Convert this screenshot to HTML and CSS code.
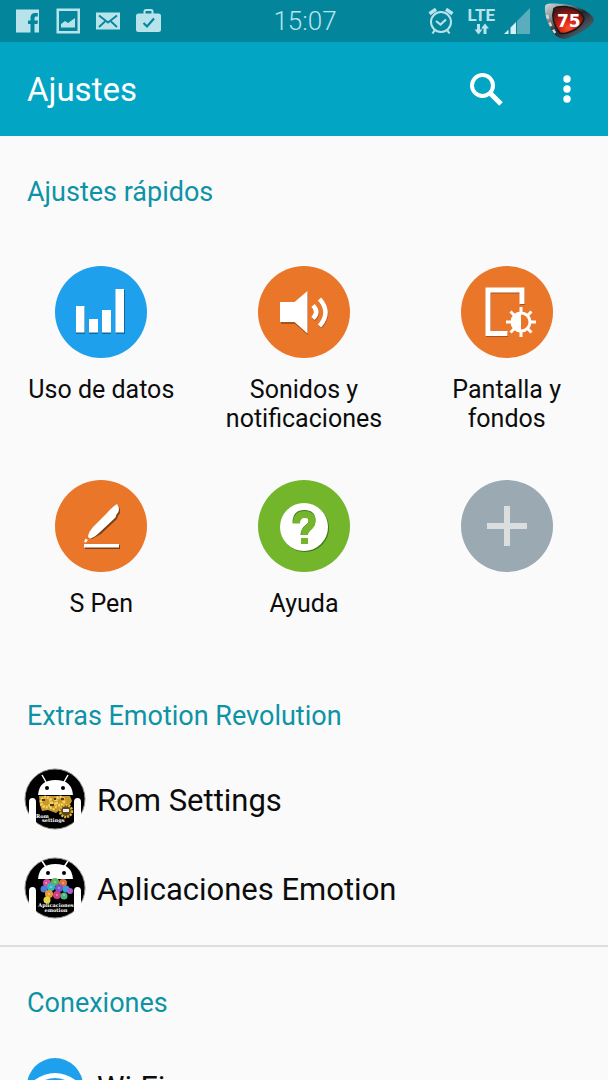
FILE: index.html
```html
<!DOCTYPE html>
<html lang="es">
<head>
  <meta charset="UTF-8" />
  <meta name="viewport" content="width=device-width, initial-scale=1.0" />
  <title>Ajustes</title>
  <link rel="stylesheet" href="styles.css">
</head>
<body>

<div class="statusbar">
  <div class="status-left">
    <svg width="24" height="26" viewBox="0 0 24 26">
      <path fill="#b9e3ea" fill-rule="evenodd" d="M0 1.500h23v23h-4.500v-8.500h3l.5-3.500h-3.500v-2.200c0-1.200.5-1.800 1.800-1.800h1.500V5h-2.600c-3.200 0-4.700 1.900-4.700 4.800v2.700h-2.500v3.500h2.500v8.500H0z"/>
    </svg>
    <svg width="24" height="26" viewBox="0 0 24 26">
      <path fill="#b9e3ea" fill-rule="evenodd" d="M.5.500h23.500v25H.500zM3 3v20h18.500V3z"/>
      <path fill="#b9e3ea" d="M5 19.500v-3.500l4-3 3 2 7-5v9.500z"/>
    </svg>
    <svg width="24" height="26" viewBox="0 0 24 26">
      <path fill="#b9e3ea" d="M0 4.500h24v17H0z"/>
      <path fill="none" stroke="#03869c" stroke-width="1.800" d="M3 7.500l9 7 9-7M3 19l6-5.500M21 19l-6-5.500"/>
    </svg>
    <svg width="25" height="26" viewBox="0 0 25 26">
      <path fill="none" stroke="#b9e3ea" stroke-width="2" d="M8.500 6V3.500q0-1.500 1.500-1.500h5q1.500 0 1.500 1.500V6"/>
      <rect x="0" y="5.500" width="25" height="18.500" rx="2.500" fill="#b9e3ea"/>
      <path fill="none" stroke="#03869c" stroke-width="2.200" d="M7.500 15l3.500 3.500 7-8"/>
    </svg>
  </div>
  <time class="clock">15:07</time>
  <div class="status-right">
    <svg width="26" height="28" viewBox="0 0 26 28">
      <g fill="none" stroke="#b9e3ea">
        <circle cx="13" cy="15" r="10" stroke-width="2"/>
        <path stroke-width="2.200" d="M8 14l4.500 3.500 5.500-5M6.500 23.500l-2 3M19.500 23.500l2 3"/>
        <path stroke-width="3.500" d="M1.500 6.800l6.500-4.500M24.500 6.800L18 2.300"/>
      </g>
    </svg>
    <div class="network">
      <div class="lte">
        <span>LTE</span>
        <svg width="15" height="12" viewBox="0 0 15 12">
          <path fill="#b9e3ea" d="M3 1h3v5.500h2.500L4.500 11.500.5 6.500H3zM9.500 11h3V5.500H15L11 .5 7 5.500h2.500z"/>
        </svg>
      </div>
      <svg width="27" height="28" viewBox="0 0 27 28">
        <path fill="#5badbd" d="M27 1v26H14V14z"/>
        <path fill="#d5f0f4" d="M13 15v12H7.500v-6.500zM5.500 22.500V27H1z"/>
      </svg>
    </div>
    <svg width="50" height="36" viewBox="0 0 50 36">
      <defs>
        <linearGradient id="shell" x1="0" y1="0" x2="1" y2="1">
          <stop offset="0" stop-color="#d5dcde"/>
          <stop offset=".25" stop-color="#8d9599"/>
          <stop offset=".5" stop-color="#20262b"/>
          <stop offset=".75" stop-color="#46545e"/>
          <stop offset="1" stop-color="#10161a"/>
        </linearGradient>
        <radialGradient id="glow" cx=".5" cy=".8" r=".75">
          <stop offset="0" stop-color="#ff4d2a"/>
          <stop offset=".5" stop-color="#c41a10"/>
          <stop offset="1" stop-color="#4a1713"/>
        </radialGradient>
      </defs>
      <path fill="url(#shell)" d="M1 3Q2 0 8 .5 27 0 40 7q9 5 10 10 0 3-7 8-12 9-23 11-8 0-14-11Q0 12 1 3z"/>
      <path fill="url(#glow)" stroke="#15181a" stroke-width="1.500" d="M10 5.500Q13 3 22 3.500 37 6 40 15q0 5-8 11-11 6-16 4Q6 18 10 5.500z"/>
      <path fill="none" stroke="#d4d8da" stroke-width="2.500" stroke-dasharray="4 4" d="M3 12q2 9 9 19"/>
      <text class="battery-text" x="13" y="24">75</text>
    </svg>
  </div>
</div>

<header class="toolbar">
  <h1>Ajustes</h1>
  <button type="button" class="tool" aria-label="Buscar">
    <svg width="34" height="34" viewBox="0 0 34 34">
      <circle cx="13.500" cy="13.500" r="10.500" fill="none" stroke="#fff" stroke-width="4"/>
      <path stroke="#fff" stroke-width="5" d="M20.500 20.500L32 32"/>
    </svg>
  </button>
  <button type="button" class="tool" aria-label="Más opciones">
    <svg width="8" height="34" viewBox="0 0 8 34">
      <g fill="#fff"><circle cx="4" cy="7" r="3.700"/><circle cx="4" cy="17" r="3.700"/><circle cx="4" cy="27" r="3.700"/></g>
    </svg>
  </button>
</header>

<main class="content">
  <section>
    <h2>Ajustes rápidos</h2>
    <div class="tiles">
      <a href="#" class="tile">
        <svg class="blue" viewBox="0 0 92 92">
          <path fill="#1567a0" d="M21 41h9v27h-9zM34 54h9v14h-9zM47 45h9v23h-9zM61 24h9v44h-9z"/>
          <path fill="#fff" d="M21 40h8.500v26.500H21zM34 53h9v13.500h-9zM47 44h9v22.500h-9zM60.500 23H69v43.500h-8.500z"/>
        </svg>
        <span>Uso de datos</span>
      </a>
      <a href="#" class="tile">
        <svg class="orange" viewBox="0 0 92 92">
          <path fill="#a8531d" d="M23 37h14l13-11v43L37 58H23z"/>
          <path fill="#fff" d="M22 36h14.500L49.500 25v42.500L36.500 56H22z"/>
          <g fill="none" stroke-width="4.500">
            <path stroke="#a8531d" d="M55.500 40.500q6.500 6.500 0 13M62 34q12 13.500 0 27"/>
            <path stroke="#fff" d="M55 39.500q6.500 6.500 0 13M61.500 33q12 13.500 0 27"/>
          </g>
        </svg>
        <span>Sonidos y notificaciones</span>
      </a>
      <a href="#" class="tile">
        <svg class="orange" viewBox="0 0 92 92">
          <path fill="none" stroke="#a8531d" stroke-width="5" d="M61.500 39V25h-34v43.500H47"/>
          <path fill="none" stroke="#fff" stroke-width="5" d="M61 38V24H27v43.500h19.500"/>
          <circle cx="60" cy="56" r="13" fill="#e97629"/>
          <g fill="none" stroke="#fff" stroke-width="3">
            <circle cx="60" cy="56" r="9"/>
            <path d="M60 41v5M60 66v5M45 56h5M70 56h5M49.500 45.500l4 4M66.500 62.500l4 4M49.500 66.500l4-4M66.500 49.500l4-4"/>
          </g>
          <path fill="#fff" d="M60 46v20a10 10 0 010-20z"/>
        </svg>
        <span>Pantalla y fondos</span>
      </a>
      <a href="#" class="tile">
        <svg class="orange" viewBox="0 0 92 92">
          <path fill="#7d4118" d="M30 65h35v4H30zM63 25l2 4v4l-2 3-1 3-16 15-9 5-3-2 1-4z"/>
          <path fill="#fff" d="M29 64h35v3.500H29zM62 24q2 2.500 2 5.500 0 2.500-2.500 5l-1 3L45 52q-5 5-9.500 6.500-2.500-.5-2.500-2.500 1-4.500 5-9l14-14q6-7 10-9zM30.500 58.500l2.500 1.500-2 2.500-2-.5z"/>
        </svg>
        <span>S Pen</span>
      </a>
      <a href="#" class="tile">
        <svg class="green" viewBox="0 0 92 92">
          <circle cx="47" cy="48" r="24" fill="#41761a"/>
          <circle cx="46" cy="47" r="24" fill="#fff"/>
          <path fill="none" stroke="#47771f" stroke-width="7" d="M38 43q0-9.500 8.500-9.500 7.500 0 7.500 7 0 4-4 7-4 3-4 7.500"/>
          <path fill="none" stroke="#73b52b" stroke-width="7" d="M38.500 43.500q0-9 8-9t7.500 6.500q0 4-4 7-3.500 3-3.500 7"/>
          <path fill="#73b52b" d="M43 58h7v6h-7z"/>
        </svg>
        <span>Ayuda</span>
      </a>
      <button type="button" class="tile" aria-label="Añadir">
        <svg class="gray" viewBox="0 0 92 92">
          <path fill="#dadede" d="M43 26h6v17h17v6H49v17h-6V49H26v-6h17z"/>
        </svg>
      </button>
    </div>
  </section>

  <section class="divided">
    <h2>Extras Emotion Revolution</h2>
    <a href="#" class="row">
      <svg class="app-icon" viewBox="0 0 62 62">
        <circle cx="31" cy="31" r="30" fill="#000" stroke="#8f8f8f"/>
        <g fill="#fff">
          <path d="M14 27q1-15 17.500-15T49 27z"/>
          <path d="M5 50V34q0-4 3.500-4t3.500 4v21q-4-2-7-5zM50 55V34q0-4 3.500-4t3.500 4v16q-3 3-7 5z"/>
        </g>
        <path stroke="#fff" stroke-width="1.500" d="M22 14l-4-7M40 14l4-7"/>
        <circle cx="23" cy="20" r="2"/><circle cx="39" cy="20" r="2"/>
        <path fill="#c9982a" d="M15 28h31l2 5-4 7-5-1-7 6-8-3-6 1-2-6z"/>
        <g fill="none" stroke="#f4d565" stroke-dasharray="2 1">
          <circle cx="22" cy="34" r="5" stroke-width="3"/>
          <circle cx="36" cy="33" r="4" stroke-width="3"/>
          <circle cx="29" cy="38" r="3" stroke-width="2"/>
        </g>
        <path fill="#4d3a10" d="M18 31h3v2h-3zM26 36h4v2h-4zM37 30h3v2h-3zM30 30h2v2h-2z"/>
        <circle cx="42" cy="43" r="6" fill="#5e4716" stroke="#e4b83d" stroke-width="2.500" stroke-dasharray="2 1"/>
        <path fill="#eee" d="M39 41h6v3h-6z"/>
        <text class="icon-text" x="12" y="50">Rom</text>
        <text class="icon-text" x="18" y="54">settings</text>
      </svg>
      <span>Rom Settings</span>
    </a>
    <a href="#" class="row">
      <svg class="app-icon" viewBox="0 0 62 62">
        <circle cx="31" cy="31" r="30" fill="#000" stroke="#8f8f8f"/>
        <g fill="#fff">
          <path d="M14 22q1-15 17.500-15T49 22z"/>
          <path d="M5 50V34q0-4 3.500-4t3.500 4v21q-4-2-7-5zM50 55V34q0-4 3.500-4t3.500 4v16q-3 3-7 5z"/>
        </g>
        <path stroke="#fff" stroke-width="1.500" d="M22 10l-4-6M40 10l4-6"/>
        <circle cx="24" cy="16" r="2"/><circle cx="40" cy="16" r="2"/>
        <circle cx="23" cy="26" r="4" fill="#d84c9c"/>
        <circle cx="31" cy="25" r="4" fill="#5bb65a"/>
        <circle cx="39" cy="26" r="4" fill="#e2703a"/>
        <circle cx="20" cy="32" r="3.500" fill="#4d7bd8"/>
        <circle cx="27" cy="30" r="4" fill="#2db8c2"/>
        <circle cx="35" cy="31" r="4" fill="#7c55c7"/>
        <circle cx="42" cy="32" r="3.500" fill="#3d9be0"/>
        <circle cx="25" cy="37" r="4" fill="#e79b34"/>
        <circle cx="33" cy="38" r="4" fill="#d53d83"/>
        <circle cx="40" cy="39" r="3.500" fill="#4ab57a"/>
        <circle cx="46" cy="34" r="3" fill="#a55fd0"/>
        <circle cx="23" cy="43" r="3.500" fill="#e5d83f"/>
        <g fill="#fff" opacity=".4"><circle cx="22" cy="26" r="1"/><circle cx="31" cy="25" r="1"/><circle cx="39" cy="26" r="1"/><circle cx="27" cy="30" r="1"/><circle cx="35" cy="31" r="1"/><circle cx="25" cy="37" r="1"/><circle cx="33" cy="38" r="1"/><circle cx="40" cy="38" r="1"/></g>
        <text class="icon-text" x="32" y="50" text-anchor="middle">Aplicaciones</text>
        <text class="icon-text" x="32" y="55" text-anchor="middle">emotion</text>
      </svg>
      <span>Aplicaciones Emotion</span>
    </a>
  </section>

  <section>
    <h2>Conexiones</h2>
    <a href="#" class="row">
      <svg class="app-icon" viewBox="0 0 62 62">
        <circle cx="31" cy="31" r="28" fill="#1ea0ec"/>
        <g fill="none" stroke="#fff" stroke-width="5">
          <path d="M12 27q19-13 38 0M19 35q12-10 24 0"/>
        </g>
        <circle cx="31" cy="43" r="4" fill="#fff"/>
      </svg>
      <span>Wi-Fi</span>
    </a>
  </section>
</main>

</body>
</html>
```
FILE: styles.css
```css
* {box-sizing: border-box;}
body {
  margin: 0;
  height: 100vh;
  display: flex;
  flex-direction: column;
  background-color: #fafafa;
  font-family: Roboto, "Liberation Sans", sans-serif;
  color: #0c0c0c;
}
h1,h2 {margin: 0; font-weight: 400;}
a {color: inherit; text-decoration: none;}
button {
  border: none;
  background: none;
  font: inherit;
  cursor: pointer;
}
svg {display: block; flex: none;}

.statusbar {
  display: grid;
  grid-template-columns: 1fr auto 1fr;
  align-items: center;
  height: 42px;
  flex: none;
  padding: 0 14px 0 16px;
  background-color: #03869c;
  color: #b9e3ea;
}
.status-left {
  display: flex;
  align-items: center;
  gap: 16px;
}
.status-right {
  display: flex;
  align-items: center;
  justify-content: flex-end;
  gap: 14px;
}
.network {display: flex; align-items: center; gap: 8px;}
.lte {
  display: flex;
  flex-direction: column;
  align-items: center;
  font-size: 17px;
  line-height: 16px;
  font-weight: 700;
}
.clock {font-size: 26px; font-weight: 300;}
.battery-text {
  font-family: "DejaVu Sans", sans-serif;
  font-size: 17px;
  font-weight: 700;
  fill: #fff;
}

.toolbar {
  display: flex;
  align-items: center;
  flex: none;
  height: 94px;
  padding: 0 37px 0 27px;
  background-color: #02a5c3;
  color: #fff;
}
.toolbar h1 {flex: 1; font-size: 33px;}
.tool {padding: 0; margin-left: 60px;}

.content {
  flex: 1;
  min-height: 0;
  overflow-y: auto;
  scrollbar-width: none;
}
h2 {
  padding: 40px 27px 22px;
  font-size: 27px;
  line-height: 32px;
  color: #0d93a6;
}
.divided {
  padding-bottom: 13px;
  border-bottom: 2px solid #dedede;
}
.tiles {
  display: grid;
  grid-template-columns: repeat(3, 1fr);
  grid-auto-rows: minmax(214px, auto);
  padding-bottom: 2px;
}
.tile {
  display: flex;
  flex-direction: column;
  align-items: center;
  gap: 17px;
  padding: 36px 20px 0;
  font-size: 25px;
  line-height: 29px;
  text-align: center;
}
.tile svg {width: 92px; height: 92px; border-radius: 50%;}
.blue {background-color: #1ea0ec;}
.orange {background-color: #e97629;}
.green {background-color: #73b52b;}
.gray {background-color: #9aa9b2;}

.row {
  display: flex;
  align-items: center;
  gap: 11px;
  height: 89px;
  padding: 0 24px;
  font-size: 31px;
}
.row span {padding-top: 4px;}
.app-icon {width: 62px; height: 62px;}
.icon-text {
  font-family: "DejaVu Serif", serif;
  font-size: 5px;
  font-weight: 700;
  fill: #fff;
}
```
